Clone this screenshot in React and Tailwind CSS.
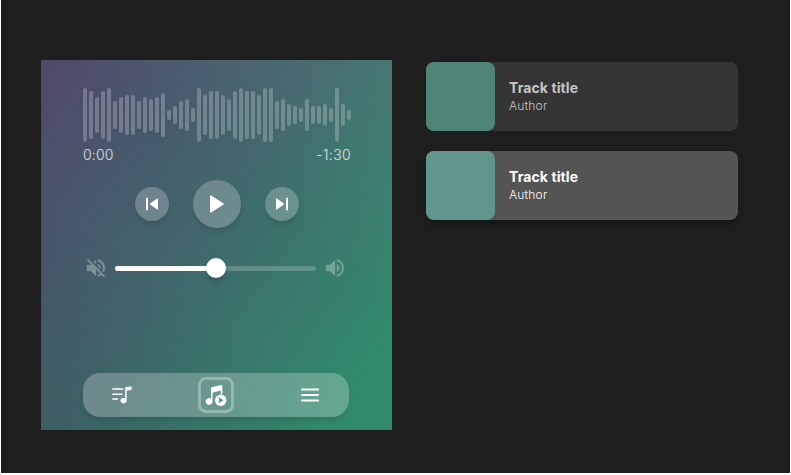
import React from "react";

const BARS = [54,48,36,48,54,28,36,40,40,28,36,32,36,44,10,18,28,32,14,54,40,48,48,40,32,48,54,48,48,40,54,54,28,32,22,18,14,32,18,18,22,14,54,22,10];

function Skip({ className = "" }) {
  return (
    <svg viewBox="0 0 14 14" className={"h-3.5 w-3.5 " + className} fill="#fff">
      <rect x="1" y=".8" width="2" height="12.4" rx=".3" />
      <path d="M12.2 1.5Q13 1 13 2V12Q13 13 12.2 12.5L5.5 7.7Q4.6 7 5.5 6.3Z" />
    </svg>
  );
}

const round = "flex items-center justify-center rounded-full bg-white/23 shadow-[0_4px_4px_rgba(0,0,0,0.1)]";

function Player() {
  return (
    <section className="h-[370px] w-[351px] bg-[linear-gradient(35deg,rgba(0,0,0,0.08)_0%,rgba(0,0,0,0)_40%,rgba(255,255,255,0)_60%,rgba(255,255,255,0.05)_100%),linear-gradient(125deg,#50486a_0%,#40696c_48%,#318a6d_89%,#318a6d_100%)] px-[42px] pt-7">
      <div className="flex h-[54px] items-center gap-0.5 drop-shadow-[0_4px_2px_rgba(0,0,0,0.08)]">
        {BARS.map((h, i) => (
          <span key={i} className="w-1 shrink-0 rounded-full bg-white/23" style={{ height: h }} />
        ))}
      </div>
      <div className="mt-[2px] flex h-5 w-[268px] items-center justify-between text-[14px] font-light tracking-[0.01em] text-white/80">
        <span>0:00</span>
        <span className="tracking-[0.025em]">-1:30</span>
      </div>
      <div className="mt-4 flex h-12 items-center gap-6 pl-[52px]">
        <button className={"h-[34px] w-[34px] " + round}><Skip /></button>
        <button className={"h-12 w-12 " + round}>
          <svg viewBox="0 0 18 20" className="h-5 w-[18px]" fill="#fff">
            <path d="M2 2.5Q2 .8 3.5 1.7L15.3 9.2Q16.5 10 15.3 10.8L3.5 18.3Q2 19.2 2 17.5Z" />
          </svg>
        </button>
        <button className={"h-[34px] w-[34px] " + round}><Skip className="rotate-180" /></button>
      </div>
      <div className="mt-[30px] flex h-5 items-center">
        <svg viewBox="0 0 24 24" className="ml-[1px] h-6 w-6 shrink-0 opacity-30" fill="#fff">
          <path d="M4.27 3 3 4.27 7.73 9H3v6h4l5 5v-6.73l4.25 4.25c-.67.52-1.42.93-2.25 1.18v2.06a8.99 8.99 0 0 0 3.69-1.81L19.73 21 21 19.73l-9-9zM12 4 9.91 6.09 12 8.18zM16.5 12A4.5 4.5 0 0 0 14 7.97v2.21l2.45 2.45c.03-.2.05-.41.05-.63zm2.5 0c0 .94-.2 1.82-.54 2.64l1.51 1.51A8.8 8.8 0 0 0 21 12c0-4.28-2.99-7.86-7-8.77v2.06c2.89.86 5 3.54 5 6.71z" stroke="#fff" strokeWidth=".3" />
        </svg>
        <div className="relative ml-[7px] flex h-5 w-[201px] items-center">
          <div className="h-[5px] w-full rounded-full bg-white/20" />
          <div className="absolute left-0 h-[5px] w-[101px] rounded-full bg-white" />
          <div className="absolute left-[91px] h-5 w-5 rounded-full bg-white shadow-[0_4px_4px_rgba(0,0,0,0.15)]" />
        </div>
        <svg viewBox="0 0 24 24" className="ml-[7px] h-6 w-6 shrink-0 opacity-30" fill="#fff">
          <path d="M3 9v6h4l5 5V4L7 9zM14 7.97v8.05a4.5 4.5 0 0 0 0-8.05zM14 3.23v2.06a7 7 0 0 1 0 13.42v2.06a9 9 0 0 0 0-17.54z" stroke="#fff" strokeWidth=".3" />
        </svg>
      </div>
      <nav className="mt-[95px] flex h-11 w-[266px] items-center rounded-[17px] bg-white/25 shadow-[0_4px_4px_rgba(0,0,0,0.1)]">
        <svg viewBox="0 0 20 18" className="ml-[29px] h-[18px] w-5" fill="#fff">
          <path d="M.3 3.1H11.3M.3 8.2H10.5M.3 13.1H6" stroke="#fff" strokeWidth="1.5" />
          <path d="M13.2 1.6Q13.2 1 14 .9L19.7.5V3.8L14.7 4.7V14.6A3.1 2.7 0 1 1 13.2 12.2Z" />
        </svg>
        <div className="ml-[66px] flex h-9 w-9 items-center justify-center rounded-lg border-[3px] border-white/30">
          <svg viewBox="0 0 22 22" className="h-[22px] w-[22px] shrink-0">
            <path d="M6 4.2Q6 3.5 6.8 3.2L16.5 1Q17.3 .8 17.3 1.5V10H15.7V6.5L7.5 8.7V17.5A3.4 3.4 0 1 1 6 14.6Z" fill="#fff" />
            <circle cx="15.7" cy="16.3" r="5.7" fill="#fff" />
            <path d="M13.9 13.3V19.3L18.6 16.3Z" fill="#5b9987" />
          </svg>
        </div>
        <svg viewBox="0 0 18 14" className="ml-[67px] h-3.5 w-[18px]" stroke="#fff" strokeWidth="2" strokeLinecap="round">
          <path d="M1 1.5H17M1 7H17M1 12.5H17" />
        </svg>
      </nav>
    </section>
  );
}

function Track({ active }) {
  return (
    <article className={"flex h-[69px] w-[312px] items-center rounded-lg " + (active ? "bg-[#545454] text-white shadow-[0_4px_4px_rgba(0,0,0,0.25)]" : "bg-[#353535] text-[#c6c6c6]")}>
      <div className={"h-[69px] w-[69px] rounded-lg " + (active ? "bg-[#5f958a]" : "bg-[#4f8579]")} />
      <div className="mb-[2px] ml-3.5">
        <h2 className="text-[14px] leading-[17px] font-bold tracking-[0.1px]">Track title</h2>
        <p className="mt-[2px] text-[12px] leading-[15px] font-light tracking-[0.2px]">Author</p>
      </div>
    </article>
  );
}

export default function App() {
  return (
    <div className="h-[475px] w-[791px] bg-white pl-px font-['Inter',sans-serif]">
      <main className="flex h-[473px] w-[789px] items-start bg-[#1e1e1e] pt-[60px] pl-10">
        <Player />
        <div className="mt-0.5 ml-[34px] flex flex-col gap-5">
          <Track />
          <Track active />
        </div>
      </main>
    </div>
  );
}
